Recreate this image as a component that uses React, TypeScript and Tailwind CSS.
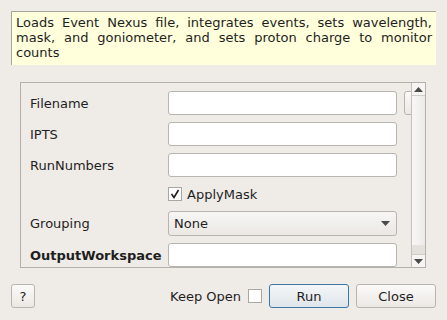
const font = { fontFamily: '"DejaVu Sans", Verdana, sans-serif' };

function Field({ label, bold }: { label: string; bold?: boolean }) {
  return (
    <div className="flex h-[24px] items-center">
      <div className={`w-[138px] shrink-0 ${bold ? "font-bold" : ""}`}>{label}</div>
      <div className="h-[24px] w-[229px] rounded-[3px] border border-[#b8b4b0] bg-white" />
    </div>
  );
}

function Arrow({ up }: { up?: boolean }) {
  return (
    <svg width="9" height="5" viewBox="0 0 9 5">
      <path d={up ? "M0 5 L4.5 0 L9 5 Z" : "M0 0 L4.5 5 L9 0 Z"} fill="#4a4a4a" />
    </svg>
  );
}

export default function App() {
  return (
    <div
      className="flex h-[320px] w-[447px] flex-col bg-[#efebe7] text-[13px] leading-[15px] text-[#1e1e1e]"
      style={font}
    >
      <div className="mx-[11px] mt-[11px] h-[54px] border-t border-l border-[#a8a4a0] bg-[#ffffdc] px-[4px] pt-[3px] text-justify">
        Loads Event Nexus file, integrates events, sets wavelength, mask, and goniometer, and sets proton charge to
        monitor counts
      </div>

      <div className="mt-[17px] ml-[20px] mr-[21px] flex h-[186px] overflow-hidden border border-[#b4b0ac]">
        <div className="flex flex-1 flex-col gap-[7px] overflow-hidden pl-[9px] pt-[8px]">
          <div className="flex h-[24px] items-center">
            <div className="w-[138px] shrink-0">Filename</div>
            <div className="h-[24px] w-[229px] shrink-0 rounded-[3px] border border-[#b8b4b0] bg-white" />
            <div className="ml-[7px] h-[24px] w-[20px] shrink-0 rounded-[3px] border border-[#b8b4b0] bg-gradient-to-b from-[#fbfaf9] to-[#ebe8e4]" />
          </div>
          <Field label="IPTS" />
          <Field label="RunNumbers" />
          <div className="flex h-[22px] items-center pl-[138px]">
            <div className="flex h-[14px] w-[14px] items-center justify-center border border-[#aaa6a2] bg-white">
              <svg width="10" height="10" viewBox="0 0 10 10">
                <path d="M1.5 5 L4 8.5 L8.5 1" fill="none" stroke="#1e1e1e" strokeWidth="1.6" />
              </svg>
            </div>
            <span className="ml-[5px]">ApplyMask</span>
          </div>
          <div className="flex h-[25px] items-center">
            <div className="w-[138px] shrink-0">Grouping</div>
            <div className="flex h-[25px] w-[229px] shrink-0 items-center justify-between rounded-[3px] border border-[#b8b4b0] bg-gradient-to-b from-[#f7f6f4] to-[#ebe8e4] pl-[5px] pr-[6px]">
              <span>None</span>
              <Arrow />
            </div>
          </div>
          <Field label="OutputWorkspace" bold />
        </div>
        <div className="flex w-[14px] shrink-0 flex-col border-l border-[#c4c0bc] bg-[#e4e1dd]">
          <div className="flex h-[13px] items-center justify-center border-b border-[#d0ccc8] bg-[#f6f5f3]">
            <Arrow up />
          </div>
          <div className="h-[149px] bg-gradient-to-r from-[#f8f7f6] to-[#ecebe9]" />
          <div className="flex-1" />
          <div className="flex h-[13px] items-center justify-center border-t border-[#d0ccc8] bg-[#f6f5f3]">
            <Arrow />
          </div>
        </div>
      </div>

      <div className="mt-[16px] flex h-[24px] items-center px-[11px]">
        <div className="flex h-[24px] w-[24px] items-center justify-center rounded-[3px] border border-[#b8b4b0] bg-gradient-to-b from-[#fbfaf9] to-[#ebe8e4]">
          ?
        </div>
        <div className="flex-1" />
        <span>Keep Open</span>
        <div className="ml-[7px] h-[14px] w-[14px] border border-[#aaa6a2] bg-white" />
        <div className="ml-[7px] flex h-[24px] w-[80px] items-center justify-center rounded-[3px] border border-[#3a76a6] bg-gradient-to-b from-[#f4f6f8] to-[#dfe5ea]">
          Run
        </div>
        <div className="ml-[7px] flex h-[24px] w-[80px] items-center justify-center rounded-[3px] border border-[#b8b4b0] bg-gradient-to-b from-[#fbfaf9] to-[#ebe8e4]">
          Close
        </div>
      </div>
    </div>
  );
}
